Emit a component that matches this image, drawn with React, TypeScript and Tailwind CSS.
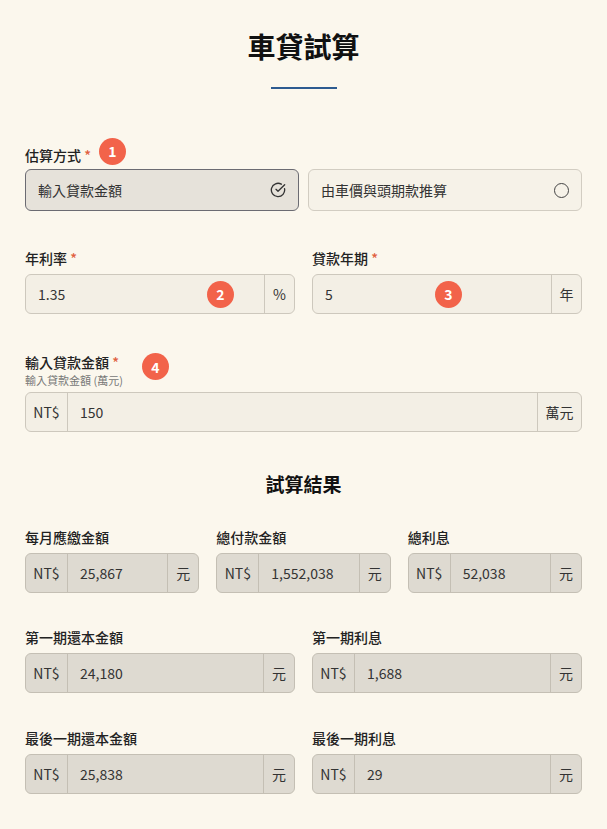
import React from "react";

const font = { fontFamily: '"Noto Sans CJK TC", "Noto Sans", sans-serif' };

function Badge({ n, cls }: { n: number; cls: string }) {
  return (
    <span className={`absolute flex h-[27px] w-[27px] items-center justify-center rounded-full bg-[#f2634a] text-[14px] font-bold text-white ${cls}`}>{n}</span>
  );
}

function Field({ label, value, unit, badge }: { label: string; value: string; unit: string; badge?: React.ReactNode }) {
  return (
    <div className="flex flex-col">
      <div className="mb-[6px] h-[20px] text-[14px] font-medium text-[#222]">
        {label} <span className="text-[#e0603f]">*</span>
      </div>
      <div className="relative flex h-[40px] rounded-[6px] border border-[#cdc8bd] bg-[#f3efe5] text-[14px] text-[#333]">
        <div className="flex flex-1 items-center pl-[12px]">{value}</div>
        <div className="flex w-[30px] items-center justify-center border-l border-[#cdc8bd]">{unit}</div>
        {badge}
      </div>
    </div>
  );
}

function Result({ label, value }: { label: string; value: string }) {
  return (
    <div className="flex flex-col">
      <div className="mb-[6px] h-[20px] text-[14px] font-medium text-[#222]">{label}</div>
      <div className="flex h-[40px] rounded-[6px] border border-[#c4bfb4] bg-[#dedad1] text-[14px] text-[#333]">
        <div className="flex w-[42px] items-center justify-center border-r border-[#c4bfb4]">NT$</div>
        <div className="flex flex-1 items-center pl-[12px]">{value}</div>
        <div className="flex w-[31px] items-center justify-center border-l border-[#c4bfb4]">元</div>
      </div>
    </div>
  );
}

export default function App() {
  return (
    <div style={font} className="min-h-[829px] w-[607px] bg-[#fbf7ed] px-[25px] pt-[26px] pb-[37px]">
      <h1 className="text-center text-[28px] font-bold leading-[40px] text-[#111]">車貸試算</h1>
      <div className="mx-auto mt-[21px] h-[2px] w-[66px] bg-[#2d5b90]" />

      <div className="relative mt-[56px] h-[20px] text-[14px] font-medium text-[#222]">
        估算方式 <span className="text-[#e0603f]">*</span>
        <Badge n={1} cls="left-[74px] top-[-7px]" />
      </div>
      <div className="mt-[4px] grid grid-cols-2 gap-[9px]">
        <div className="flex h-[42px] items-center justify-between rounded-[6px] border border-[#6b6b72] bg-[#e6e2da] px-[12px] text-[14px] text-[#333]">
          <span>輸入貸款金額</span>
          <svg width="16" height="16" viewBox="0 0 24 24" fill="none" stroke="#333" strokeWidth="2" strokeLinecap="round" strokeLinejoin="round"><path d="M21.8 10A10 10 0 1 1 17 3.3" /><path d="m9 11 3 3L22 4" /></svg>
        </div>
        <div className="flex h-[42px] items-center justify-between rounded-[6px] border border-[#d2cdc2] bg-[#f6f2e8] px-[12px] text-[14px] text-[#333]">
          <span>由車價與頭期款推算</span>
          <span className="h-[15px] w-[15px] rounded-full border-[1.5px] border-[#444]" />
        </div>
      </div>

      <div className="mt-[37px] grid grid-cols-2 gap-[17px]">
        <Field label="年利率" value="1.35" unit="%" badge={<Badge n={2} cls="left-[181px] top-[6px]" />} />
        <Field label="貸款年期" value="5" unit="年" badge={<Badge n={3} cls="left-[122px] top-[6px]" />} />
      </div>

      <div className="relative mt-[38px] text-[14px] font-medium leading-[20px] text-[#222]">
        輸入貸款金額 <span className="text-[#e0603f]">*</span>
        <Badge n={4} cls="left-[117px] top-[1px]" />
      </div>
      <div className="text-[11px] leading-[16px] text-[#777]">輸入貸款金額 (萬元)</div>
      <div className="mt-[4px] flex h-[40px] rounded-[6px] border border-[#cdc8bd] bg-[#f3efe5] text-[14px] text-[#333]">
        <div className="flex w-[42px] items-center justify-center border-r border-[#cdc8bd]">NT$</div>
        <div className="flex flex-1 items-center pl-[12px]">150</div>
        <div className="flex w-[44px] items-center justify-center border-l border-[#cdc8bd]">萬元</div>
      </div>

      <h2 className="mt-[38px] text-center text-[19px] font-bold leading-[28px] text-[#111]">試算結果</h2>

      <div className="mt-[29px] grid grid-cols-3 gap-[17px]">
        <Result label="每月應繳金額" value="25,867" />
        <Result label="總付款金額" value="1,552,038" />
        <Result label="總利息" value="52,038" />
      </div>
      <div className="mt-[34px] grid grid-cols-2 gap-[17px]">
        <Result label="第一期還本金額" value="24,180" />
        <Result label="第一期利息" value="1,688" />
      </div>
      <div className="mt-[35px] grid grid-cols-2 gap-[17px]">
        <Result label="最後一期還本金額" value="25,838" />
        <Result label="最後一期利息" value="29" />
      </div>
    </div>
  );
}
